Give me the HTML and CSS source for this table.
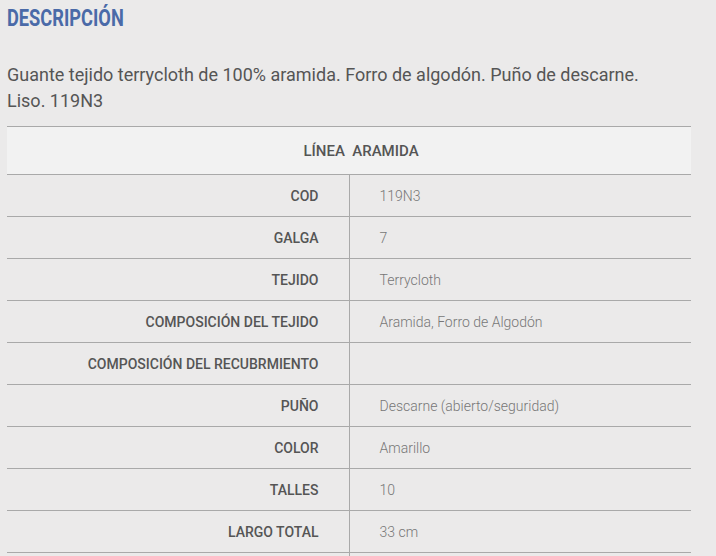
FILE: index.html
```html
<!DOCTYPE html>
<html lang="es">
<head>
<meta charset="utf-8">
<link rel="stylesheet" href="styles.css">
</head>
<body>
<div class="page">
  <h2 class="title"><span>DESCRIPCIÓN</span></h2>
  <p class="desc">Guante tejido terrycloth de 100% aramida. Forro de algodón. Puño de descarne. Liso. 119N3</p>
  <table class="specs">
    <thead>
      <tr><th colspan="2">LÍNEA&nbsp;&nbsp;ARAMIDA</th></tr>
    </thead>
    <tbody>
      <tr><td class="k">COD</td><td class="v">119N3</td></tr>
      <tr><td class="k">GALGA</td><td class="v">7</td></tr>
      <tr><td class="k">TEJIDO</td><td class="v">Terrycloth</td></tr>
      <tr><td class="k">COMPOSICIÓN DEL TEJIDO</td><td class="v">Aramida, Forro de Algodón</td></tr>
      <tr><td class="k">COMPOSICIÓN DEL RECUBRMIENTO</td><td class="v"></td></tr>
      <tr><td class="k">PUÑO</td><td class="v">Descarne (abierto/seguridad)</td></tr>
      <tr><td class="k">COLOR</td><td class="v">Amarillo</td></tr>
      <tr><td class="k">TALLES</td><td class="v">10</td></tr>
      <tr><td class="k">LARGO TOTAL</td><td class="v">33 cm</td></tr>
      <tr><td class="k"></td><td class="v"></td></tr>
    </tbody>
  </table>
</div>
</body>
</html>
```
FILE: styles.css
```css
html, body {
  margin: 0;
  background: #ebeaea;
}
body {
  font-family: Roboto, "Liberation Sans", sans-serif;
  color: #555;
}
.page {
  padding: 0 25px 0 7px;
}
.title {
  margin: 0;
  padding-top: 4px;
  height: 34px;
  font-size: 24px;
  line-height: 28px;
  font-weight: 700;
  color: #4a6aa8;
}
.title span {
  display: inline-block;
  transform: scaleX(0.76);
  transform-origin: left center;
}
.desc {
  margin: 24px 0 0;
  max-width: 660px;
  font-size: 18px;
  line-height: 26px;
  color: #555;
}
.specs {
  margin-top: 12px;
  width: 684px;
  border-collapse: collapse;
  table-layout: fixed;
}
.specs th {
  height: 47px;
  background: #f2f2f2;
  border-top: 1px solid #a9a9a9;
  border-bottom: 1px solid #a9a9a9;
  font-size: 15px;
  font-weight: 500;
  color: #555;
  text-align: center;
  padding: 0 0 0 24px;
}
.specs td {
  height: 41px;
  padding: 0;
  border-bottom: 1px solid #a9a9a9;
  font-size: 14px;
}
.specs td.k {
  width: 341px;
  text-align: right;
  padding-right: 30px;
  font-weight: 500;
  color: #555;
  border-right: 1px solid #a9a9a9;
}
.specs td.v {
  padding-left: 30px;
  color: #777;
  font-weight: 300;
}
```
